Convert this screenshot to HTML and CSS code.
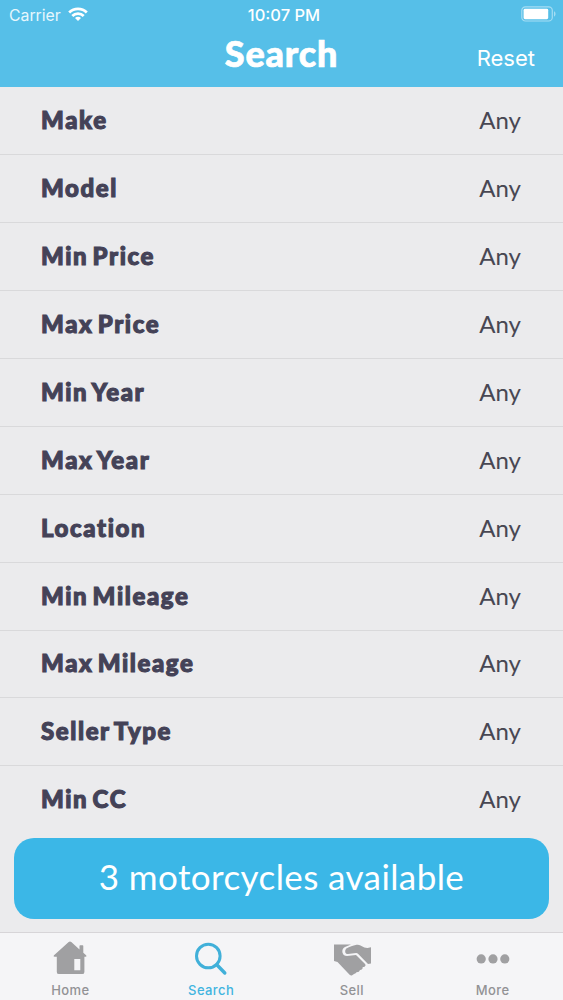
FILE: index.html
```html
<!DOCTYPE html>
<html lang="en">
<head>
  <meta charset="UTF-8" />
  <title>Search</title>
  <meta name="viewport" content="width=device-width, initial-scale=1.0" />
  <link rel="stylesheet" href="styles.css">
</head>
<body>
  <header class="header">
    <div class="status">
      <div class="carrier">
        <span>Carrier</span>
        <svg class="wifi" viewBox="0 0 20 15" width="20" height="15">
          <g fill="none" stroke="#fff" stroke-width="2.8">
            <path d="M1.2 5.4a12.6 12.6 0 0 1 17.6 0" />
            <path d="M4.3 8.9a8.1 8.1 0 0 1 11.4 0" />
          </g>
          <path d="M10 14l-3-3a4.2 4.2 0 0 1 6 0z" fill="#fff" />
        </svg>
      </div>
      <div class="clock">10:07 PM</div>
      <svg class="battery" viewBox="0 0 35 16" width="35" height="16">
        <rect x=".8" y=".8" width="30.5" height="14.2" rx="3.6" fill="none" stroke="#a5ddf3" stroke-width="1.2" />
        <rect x="2.6" y="2.8" width="24.6" height="10.4" rx="1.4" fill="#fff" />
        <path d="M33 5.2c2 .8 2 4.6 0 5.4z" fill="#a5ddf3" />
      </svg>
    </div>
    <div class="nav">
      <h1>Search</h1>
      <a class="reset">Reset</a>
    </div>
  </header>

  <!-- Search filters -->
  <main class="filters">
    <div class="row"><b>Make</b><span>Any</span></div>
    <div class="row"><b>Model</b><span>Any</span></div>
    <div class="row"><b>Min Price</b><span>Any</span></div>
    <div class="row"><b>Max Price</b><span>Any</span></div>
    <div class="row"><b>Min Year</b><span>Any</span></div>
    <div class="row"><b>Max Year</b><span>Any</span></div>
    <div class="row"><b>Location</b><span>Any</span></div>
    <div class="row"><b>Min Mileage</b><span>Any</span></div>
    <div class="row"><b>Max Mileage</b><span>Any</span></div>
    <div class="row"><b>Seller Type</b><span>Any</span></div>
    <div class="row"><b>Min CC</b><span>Any</span></div>
  </main>

  <div class="results">
    <button class="results-btn">3 motorcycles available</button>
  </div>

  <!-- Tab bar -->
  <nav class="tabs">
    <a class="tab">
      <svg viewBox="0 0 40 40" width="40" height="40">
        <path fill="#a0a0a2" fill-rule="evenodd" d="M20 5.5q.7 0 1.3.5l8.200 7.400V10q0-.7.7-.7h2.400q.7 0 .7.7v6.700l2.800 2.600q1.200 1.400-.5 1.400h-1.200v15.200q0 2.200-2.200 2.200H9q-2.200 0-2.200-2.200V20.700H4.500q-1.700 0-.5-1.400L18.700 6q.6-.5 1.300-.5zM24.300 23v11.200h6V23z" />
      </svg>
      <span>Home</span>
    </a>
    <a class="tab active">
      <svg viewBox="0 0 40 40" width="40" height="40">
        <circle cx="17.3" cy="20" r="11.8" fill="none" stroke="#41b0d9" stroke-width="3" />
        <path d="M25.800 28.800l8 8.200" stroke="#41b0d9" stroke-width="3.400" stroke-linecap="round" />
      </svg>
      <span>Search</span>
    </a>
    <a class="tab">
      <svg viewBox="0 0 40 40" width="40" height="40">
        <path fill="#a0a0a2" d="M2 8.500h17l-6 2.500q-3.500 2-2.500 5.700 1 3.300 4.500 3.300l9-1 9.300 9.200q.8 1.500-.8 2.500-1 .5-1.800.2.300 2.600-2.700 3-.6 2.400-3.500 2.300-.5 1.300-2.500 1.800l-1.800 1.300q-1.300.7-2.600-.5L5.500 26 2 25z" />
        <path fill="#a0a0a2" d="M14 12.700q2.500-1.700 6-2.700l4.500-1.200q2-.4 4 .6 4.500 2.600 7 2.500l3.500-.7V27.500l-3 .5-10-10.300q-.8-.7-2-.6l-8 1q-2 .2-2.700-1.600-.6-1.800.7-3.800z" />
      </svg>
      <span>Sell</span>
    </a>
    <a class="tab">
      <svg viewBox="0 0 40 40" width="40" height="40">
        <g fill="#a0a0a2">
          <circle cx="8.200" cy="22.900" r="4.600" />
          <circle cx="20" cy="22.900" r="4.600" />
          <circle cx="31.800" cy="22.900" r="4.600" />
        </g>
      </svg>
      <span>More</span>
    </a>
  </nav>
</body>
</html>
```
FILE: styles.css
```css
* { box-sizing: border-box; }
body {
  margin: 0;
  height: 1000px;
  display: flex;
  flex-direction: column;
  background: #ebebed;
  font-family: Lato, sans-serif;
  overflow: hidden;
}

/* Header */
.header {
  height: 87px;
  flex: none;
  background: #56bfe8;
  color: #fff;
}
.status {
  height: 30px;
  padding: 0 7px 0 9px;
  display: grid;
  grid-template-columns: 1fr auto 1fr;
  align-items: center;
  font: 16.5px Inter, sans-serif;
}
.carrier {
  display: flex;
  align-items: center;
  gap: 7px;
  color: #e6f7fd;
  font-size: 15.8px;
}
.wifi { margin-top: -1px; }
.clock { font-weight: 500; padding-left: 3px; }
.battery { justify-self: end; margin-top: -2px; }
.nav {
  height: 50px;
  padding-right: 28px;
  display: grid;
  grid-template-columns: 1fr auto 1fr;
  align-items: center;
}
h1 {
  grid-column: 2;
  margin: 0 0 4px 28px;
  font-size: 36px;
  font-weight: 900;
  line-height: 40px;
  letter-spacing: .8px;
  -webkit-text-stroke: .7px #fff;
}
.reset {
  justify-self: end;
  padding-top: 5px;
  font: 22px Inter, sans-serif;
}

/* Filters */
.filters { height: 747px; flex: none; }
.row {
  height: 67.95px;
  padding: 0 42px 2px 41px;
  display: flex;
  justify-content: space-between;
  align-items: center;
  border-bottom: 1px solid #d9d9db;
  color: #444257;
  font-size: 24px;
}
.row:last-child { border-bottom: 0; padding-bottom: 4px; }
.row b {
  font-weight: 900;
  letter-spacing: 1.6px;
  word-spacing: -3px;
  -webkit-text-stroke: 1.1px #444257;
}
.row span { color: #484753; }

.results {
  height: 98px;
  flex: none;
  padding: 4px 14px 13px;
}
.results-btn {
  width: 100%;
  height: 81px;
  padding: 0 0 5px;
  border: 0;
  border-radius: 20px;
  background: #3bb7e7;
  color: #fff;
  font: 35px Lato, sans-serif;
  letter-spacing: .4px;
}

/* Tab bar */
.tabs {
  height: 68px;
  flex: none;
  display: grid;
  grid-template-columns: repeat(4, 1fr);
  border-top: 1px solid #d7d5d8;
  background: #f5f5f7;
}
.tab {
  display: flex;
  flex-direction: column;
  align-items: center;
  padding-top: 3px;
  color: #929295;
  font: 500 13px/16px Inter, sans-serif;
}
.tab span { margin-top: 6px; letter-spacing: .4px; }
.active { color: #41b4df; }
```
